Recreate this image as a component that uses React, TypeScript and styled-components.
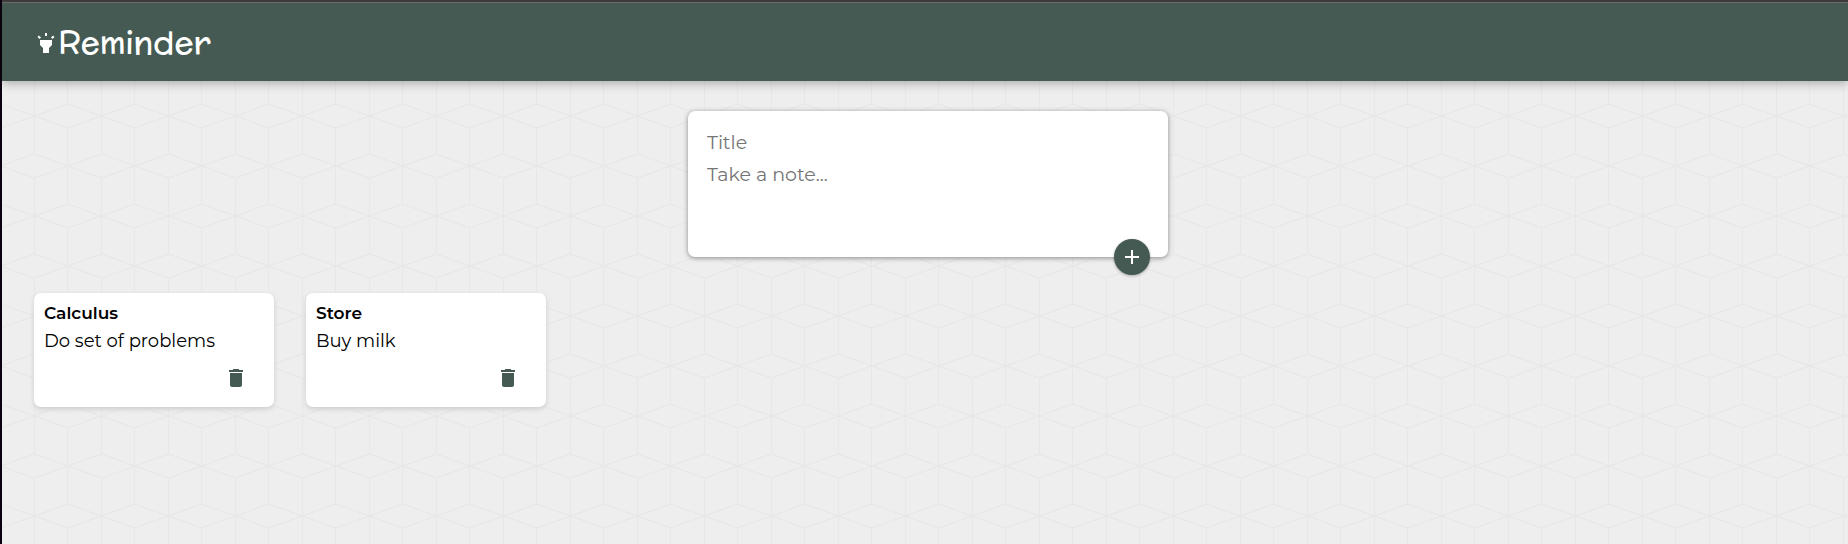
import React, { useState } from "react";
import styled, { createGlobalStyle } from "styled-components";

const cubes = encodeURIComponent(
  `<svg xmlns="http://www.w3.org/2000/svg" width="67" height="100" viewBox="0 0 67 100"><g fill="none" stroke="#e7e7e7"><path d="M33.5 -12.5V38M33.5 62V100M66.5 12V88M-.5 12V88"/><path stroke-width="1.3" transform="translate(0 -.5)" d="M-.5 -11.5L33.5 .5L66.5 -11.5L100 .5M-33.5 .5L-.5 12.5L33.5 .5L66.5 12.5L100 .5M-.5 50.5L33.5 38.5L66.5 50.5L33.5 62.5ZM66.5 50.5L100 38.5M66.5 50.5L100 62.5M-.5 50.5L-34 38.5M-.5 50.5L-34 62.5M-33.5 100.5L-.5 88.5L33.5 100.5L66.5 88.5L100 100.5"/></g></svg>`
);

const GlobalStyle = createGlobalStyle`
  * { box-sizing: border-box; }
  body {
    margin: 0;
    color: #000;
    font-family: Montserrat, Inter, sans-serif;
    background: #eee url("data:image/svg+xml,${cubes}") 1px 16px;
  }
  button, input, textarea { font-family: inherit; }
`;

const Page = styled.div`
  min-height: 100vh;
  border-left: 2px solid #0c0010;
`;

const Header = styled.header`
  display: flex;
  align-items: center;
  padding: 9px 32px 7px;
  border-top: 2px solid #3d3b3c;
  background: #455a53;
  box-shadow: 0 2px 10px rgba(0, 0, 0, 0.3), inset 0 1px 0 #6b6b6b;
`;

const Brand = styled.h1`
  display: flex;
  align-items: center;
  margin: 0;
  color: #fff;
  font: 400 32px/63px McLaren, Lato, sans-serif;
`;

const Icon = styled.svg`
  display: block;
  width: 24px;
  height: 24px;
  fill: currentColor;
`;

const Main = styled.main`
  padding: 30px 26px 30px 32px;
`;

const NoteForm = styled.form`
  position: relative;
  display: flex;
  flex-direction: column;
  width: 100%;
  max-width: 480px;
  height: 146px;
  margin: 0 auto 36px;
  padding: 16px 19px;
  border-radius: 7px;
  background: #fff;
  box-shadow: 0 1px 5px #8a8989;
`;

const TitleField = styled.input`
  padding: 0;
  border: 0;
  outline: 0;
  background: none;
  font-size: 19px;
  line-height: 32px;
  &::placeholder { color: #757575; opacity: 1; }
`;

const BodyField = styled(TitleField).attrs({ as: "textarea" })`
  flex: 1;
  resize: none;
`;

const AddButton = styled.button`
  position: absolute;
  right: 18px;
  bottom: -18px;
  display: grid;
  place-items: center;
  width: 36px;
  height: 36px;
  padding: 0;
  border: 0;
  border-radius: 50%;
  color: #fff;
  background: #455a53;
  box-shadow: 0 1px 3px rgba(0, 0, 0, 0.3);
  cursor: pointer;
`;

const Notes = styled.section`
  display: flex;
  flex-wrap: wrap;
  gap: 32px;
`;

const NoteCard = styled.article`
  display: flex;
  flex-direction: column;
  width: 240px;
  padding: 10px;
  border-radius: 7px;
  background: #fff;
  box-shadow: 0 2px 5px #ccc;
`;

const NoteTitle = styled.h2`
  margin: 0 0 4px;
  font-size: 17px;
  font-weight: 600;
  line-height: 21px;
`;

const NoteText = styled.p`
  margin: 0 0 12px;
  font-size: 18px;
  line-height: 26px;
  overflow-wrap: break-word;
`;

const DeleteButton = styled.button`
  align-self: flex-end;
  margin: 0 16px 7px 0;
  padding: 0;
  border: 0;
  color: #455a53;
  background: none;
  cursor: pointer;
`;

const HIGHLIGHT =
  "M6 14l3 3v5h6v-5l3-3V9H6v5zM11 2h2v3h-2zM3.5 5.875L4.914 4.46l2.12 2.122L5.62 7.997zM16.96 6.585l2.123-2.12 1.414 1.414L18.375 8z";
const PLUS = "M19 13h-6v6h-2v-6H5v-2h6V5h2v6h6v2z";
const TRASH =
  "M6 19c0 1.1.9 2 2 2h8c1.1 0 2-.9 2-2V7H6v12zM19 4h-3.5l-1-1h-5l-1 1H5v2h14V4z";

const Glyph = ({ d }: { d: string }) => (
  <Icon viewBox="0 0 24 24" aria-hidden="true">
    <path d={d} />
  </Icon>
);

interface Note {
  title: string;
  text: string;
}

export default function App() {
  const [notes, setNotes] = useState<Note[]>([
    { title: "Calculus", text: "Do set of problems" },
    { title: "Store", text: "Buy milk" },
  ]);
  const [title, setTitle] = useState("");
  const [text, setText] = useState("");

  const addNote = (event: React.FormEvent) => {
    event.preventDefault();
    setNotes([...notes, { title, text }]);
    setTitle("");
    setText("");
  };

  return (
    <Page>
      <GlobalStyle />
      <Header>
        <Brand>
          <Glyph d={HIGHLIGHT} />
          Reminder
        </Brand>
      </Header>
      <Main>
        <NoteForm onSubmit={addNote}>
          <TitleField
            aria-label="Title"
            placeholder="Title"
            value={title}
            onChange={(e) => setTitle(e.target.value)}
          />
          <BodyField
            aria-label="Note"
            placeholder="Take a note..."
            value={text}
            onChange={(e) => setText(e.target.value)}
          />
          <AddButton type="submit" aria-label="Add note">
            <Glyph d={PLUS} />
          </AddButton>
        </NoteForm>
        <Notes>
          {notes.map((note, index) => (
            <NoteCard key={index}>
              <NoteTitle>{note.title}</NoteTitle>
              <NoteText>{note.text}</NoteText>
              <DeleteButton
                type="button"
                aria-label={`Delete ${note.title}`}
                onClick={() => setNotes(notes.filter((_, i) => i !== index))}
              >
                <Glyph d={TRASH} />
              </DeleteButton>
            </NoteCard>
          ))}
        </Notes>
      </Main>
    </Page>
  );
}
